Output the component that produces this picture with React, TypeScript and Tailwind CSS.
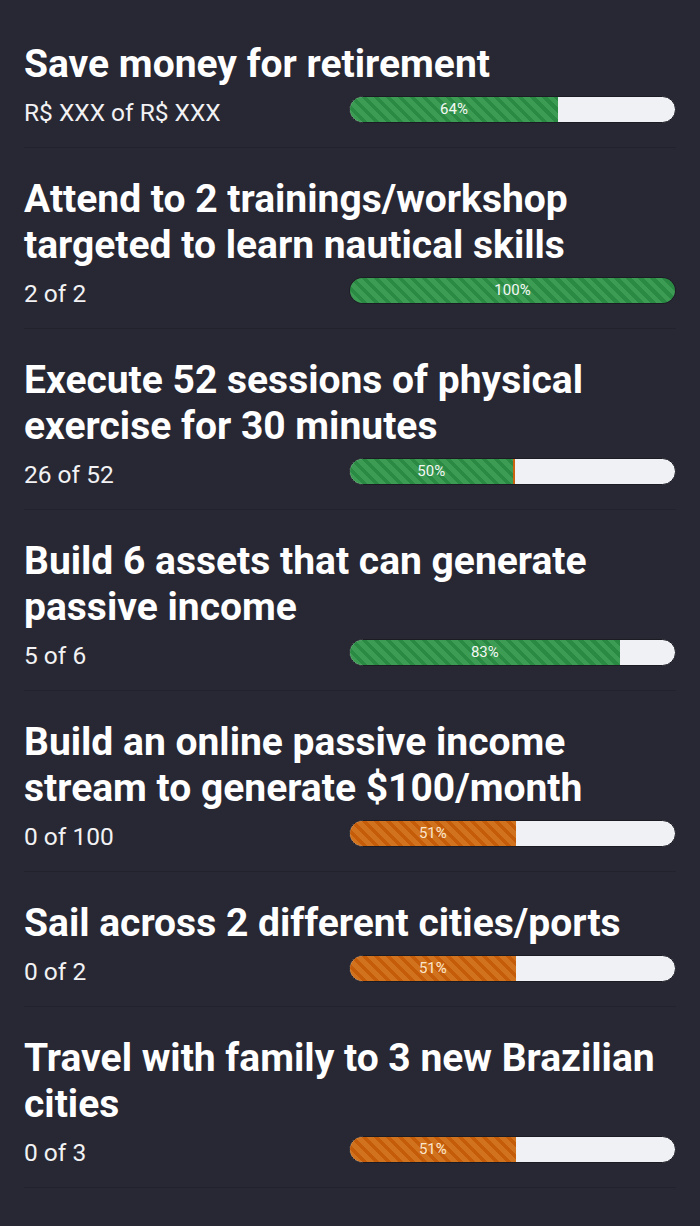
import React from "react";

type Goal = {
  title: string;
  progress: string;
  pct: number;
  color: "green" | "orange";
  extra?: number;
};

const goals: Goal[] = [
  { title: "Save money for retirement", progress: "R$ XXX of R$ XXX", pct: 64, color: "green" },
  { title: "Attend to 2 trainings/workshop targeted to learn nautical skills", progress: "2 of 2", pct: 100, color: "green" },
  { title: "Execute 52 sessions of physical exercise for 30 minutes", progress: "26 of 52", pct: 50, color: "green", extra: 0.7 },
  { title: "Build 6 assets that can generate passive income", progress: "5 of 6", pct: 83, color: "green" },
  { title: "Build an online passive income stream to generate $100/month", progress: "0 of 100", pct: 51, color: "orange" },
  { title: "Sail across 2 different cities/ports", progress: "0 of 2", pct: 51, color: "orange" },
  { title: "Travel with family to 3 new Brazilian cities", progress: "0 of 3", pct: 51, color: "orange" },
];

const stripes = {
  green: "repeating-linear-gradient(45deg, #2a8943 0px, #2a8943 4px, #3c9c54 4px, #3c9c54 8.5px)",
  orange: "repeating-linear-gradient(45deg, #c45c09 0px, #c45c09 4px, #d1721f 4px, #d1721f 8.5px)",
};

const ProgressBar = ({ pct, color, extra }: { pct: number; color: "green" | "orange"; extra?: number }) => {
  return (
    <div className="flex h-[27px] w-[327px] overflow-hidden rounded-full border border-[#1b1c24] bg-[#f0f1f5]">
      <div
        className="flex h-full items-center justify-center"
        style={{ width: `${pct}%`, backgroundImage: stripes[color] }}
      >
        <span
          className={
            color === "green"
              ? "text-[15px] text-[#f4f8f4]"
              : "text-[15px] text-[#fbe6cc]"
          }
        >
          {pct}%
        </span>
      </div>
      {extra ? (
        <div className="h-full bg-[#c8630f]" style={{ width: `${extra}%` }} />
      ) : null}
    </div>
  );
};

export default function App() {
  return (
    <div
      className="min-h-[1226px] w-full bg-[#272833] px-6 pt-[13px]"
      style={{ fontFamily: "Roboto, 'Noto Sans', sans-serif" }}
    >
      {goals.map((g) => (
        <div key={g.title} className="border-b border-[#21222b] pt-7 pb-6">
          <h2 className="text-[39px] font-bold leading-[46px] text-white">{g.title}</h2>
          <div className="mt-[9px] flex h-[27px] items-center justify-between">
            <span className="mt-[8px] text-[24.5px] text-[#f2f2f4]">{g.progress}</span>
            <ProgressBar pct={g.pct} color={g.color} extra={g.extra} />
          </div>
        </div>
      ))}
    </div>
  );
}
